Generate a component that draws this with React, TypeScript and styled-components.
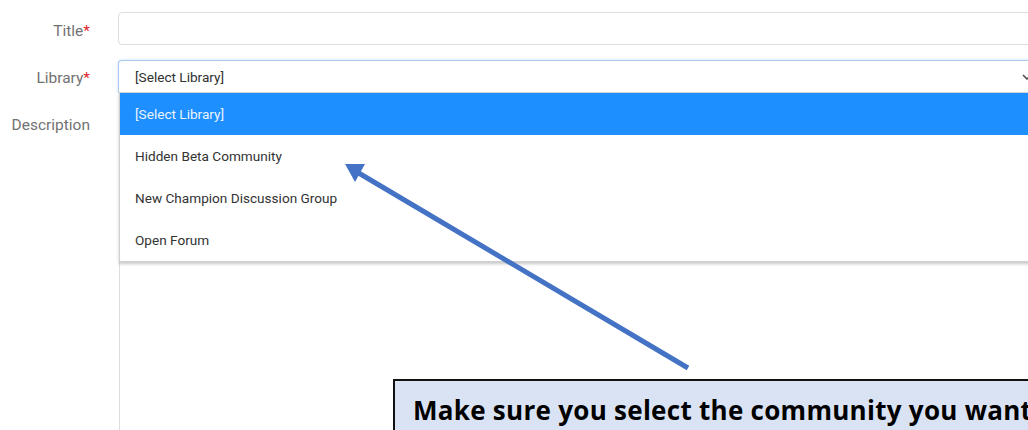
import React from "react";
import styled, { createGlobalStyle } from "styled-components";

const Global = createGlobalStyle`
  html, body {
    margin: 0;
    padding: 0;
    background: #ffffff;
    overflow: hidden;
  }
  body {
    width: 1028px;
    height: 430px;
    position: relative;
    font-family: Roboto, "Liberation Sans", Arial, sans-serif;
  }
`;

const Page = styled.div`
  position: relative;
  width: 1028px;
  height: 430px;
  overflow: hidden;
  padding-top: 12px;
  box-sizing: border-box;
`;

const Form = styled.form`
  display: grid;
  grid-template-columns: 90px 920px;
  column-gap: 28px;
  row-gap: 15px;
  align-items: start;
`;

/* height stays at the field height; the line box may sit a little lower */
const Label = styled.label<{ $drop?: number }>`
  justify-self: end;
  height: 33px;
  font-size: 15.5px;
  color: #727272;
  line-height: ${(p) => 33 + 2 * (p.$drop ?? 0)}px;
  white-space: nowrap;
`;

const Req = styled.span`
  color: #e0282e;
`;

const TextInput = styled.div`
  height: 33px;
  box-sizing: border-box;
  border: 1px solid #dedede;
  border-radius: 4px;
  background: #fff;
`;

const SelectWrap = styled.div`
  position: relative;
  z-index: 2;
`;

const SelectBox = styled.div`
  height: 33px;
  box-sizing: border-box;
  border: 1px solid #a9cbf0;
  border-bottom-color: #d6d6d6;
  border-radius: 4px 4px 0 0;
  box-shadow: 0 0 3px rgba(102, 160, 230, 0.35);
  background: #fff;
  display: flex;
  align-items: center;
  padding: 0 16px;
  font-size: 13.6px;
  color: #303030;
`;

const Chevron = styled.svg`
  margin-left: auto;
  margin-right: -12px;
`;

const Menu = styled.ul`
  position: absolute;
  top: 100%;
  left: 1px;
  right: 0;
  margin: 0;
  padding: 0;
  list-style: none;
  background: #fff;
  border: 1px solid #d0d0d0;
  border-top: none;
  box-shadow: 0 2px 3px rgba(0, 0, 0, 0.22);
`;

const Option = styled.li<{ $active?: boolean }>`
  height: 42px;
  display: flex;
  align-items: center;
  padding-left: 15px;
  font-size: 13.6px;
  color: ${(p) => (p.$active ? "#eaf3ff" : "#333")};
  background: ${(p) => (p.$active ? "#1e8fff" : "transparent")};
`;

const TextArea = styled.div`
  height: 400px;
  box-sizing: border-box;
  border: 1px solid #dedede;
  border-radius: 4px;
  margin-left: 1px;
  background: #fff;
`;

const Callout = styled.div`
  position: absolute;
  left: 393px;
  top: 379px;
  width: 760px;
  height: 80px;
  box-sizing: border-box;
  background: #dae3f3;
  border: 2px solid #111;
  padding: 11px 0 0 18px;
  font-family: "Open Sans", Lato, sans-serif;
  font-weight: 700;
  font-size: 26px;
  letter-spacing: 0.28px;
  color: #000;
  white-space: nowrap;
  z-index: 3;
`;

const Pointer = styled.svg`
  position: absolute;
  left: 0;
  top: 0;
  z-index: 4;
  pointer-events: none;
`;

const libraries = [
  "[Select Library]",
  "Hidden Beta Community",
  "New Champion Discussion Group",
  "Open Forum",
];

export default function App() {
  return (
    <Page>
      <Global />
      <Form>
        <Label $drop={2.5}>
          Title<Req>*</Req>
        </Label>
        <TextInput />

        <Label $drop={1.5}>
          Library<Req>*</Req>
        </Label>
        <SelectWrap>
          <SelectBox>
            [Select Library]
            <Chevron width="12" height="12" viewBox="0 0 12 12">
              <path d="M2 4 L6 8 L10 4" fill="none" stroke="#444" strokeWidth="1.5" />
            </Chevron>
          </SelectBox>
          <Menu>
            {libraries.map((name, i) => (
              <Option key={name} $active={i === 0}>
                {name}
              </Option>
            ))}
          </Menu>
        </SelectWrap>

        <Label $drop={1}>Description</Label>
        <TextArea />
      </Form>

      <Pointer width="1028" height="430" viewBox="0 0 1028 430">
        <line x1="688" y1="368" x2="357" y2="172" stroke="#4472c4" strokeWidth="5" />
        <polygon points="345,164 365,164 355,182" fill="#4472c4" />
      </Pointer>

      <Callout>Make sure you select the community you want to post in</Callout>
    </Page>
  );
}
